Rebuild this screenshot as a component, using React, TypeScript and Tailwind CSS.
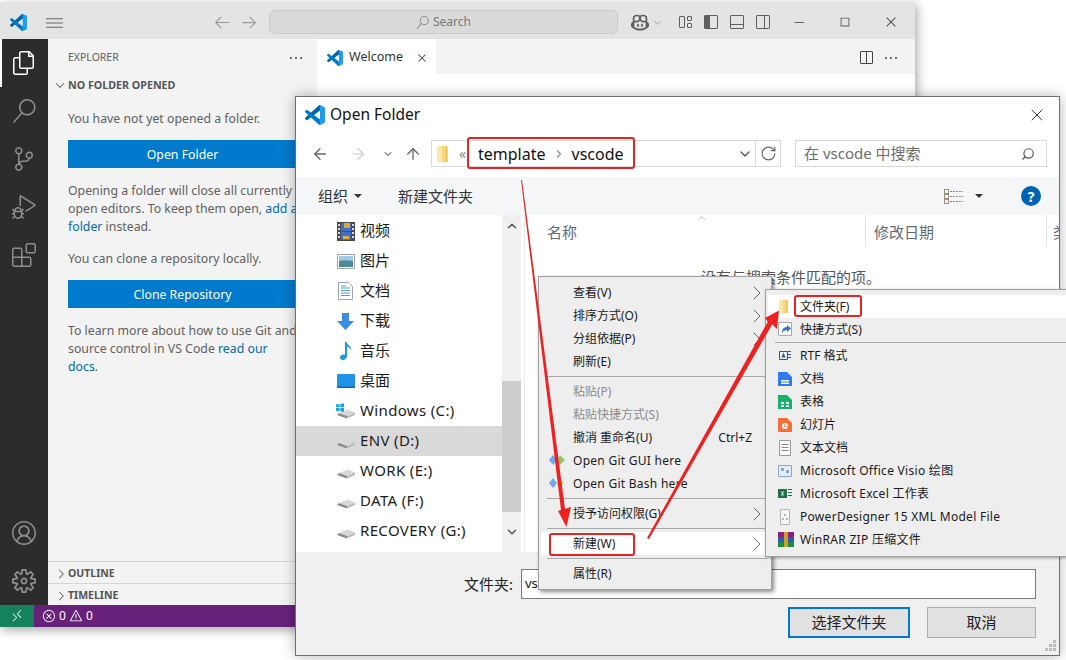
import React from "react";
import {
  VscFiles, VscSearch, VscSourceControl, VscDebugAlt, VscExtensions, VscAccount, VscSettingsGear,
  VscCopilot, VscChevronDown, VscChevronRight, VscEllipsis, VscArrowLeft, VscArrowRight, VscMenu,
  VscChromeMinimize, VscChromeMaximize, VscChromeClose, VscClose, VscSplitHorizontal, VscRemote,
  VscError, VscWarning, VscLayoutSidebarLeft, VscLayoutPanelOff, VscLayoutSidebarRightOff, VscLayout,
} from "react-icons/vsc";
import { ArrowLeft, ArrowRight, ArrowUp, ChevronDown, ChevronUp, ChevronRight, RotateCw, Search, X } from "lucide-react";

const Logo = ({ s = 18 }: { s?: number }) => (
  <svg width={s} height={s} viewBox="0 0 100 100" className="shrink-0">
    <path fill="#0065A9" d="M96.46 10.8 75.86.88C73.47-.27 70.62.21 68.75 2.08L1.3 63.58c-1.81 1.65-1.81 4.51 0 6.16l5.51 5.01c1.49 1.35 3.72 1.45 5.32.24L93.36 13.37C96.09 11.3 100 13.25 100 16.67v-.24c0-2.4-1.38-4.59-3.54-5.63Z" />
    <path fill="#007ACC" d="M96.46 89.2 75.86 99.12c-2.39 1.15-5.24.67-7.11-1.2L1.3 36.42c-1.81-1.66-1.81-4.51 0-6.16l5.51-5.01c1.49-1.35 3.72-1.45 5.32-.24l81.23 61.62c2.73 2.07 6.64.12 6.64-3.3v.24c0 2.4-1.38 4.59-3.54 5.63Z" />
    <path fill="#1F9CF0" d="M75.86 99.13c-2.39 1.15-5.24.66-7.11-1.21 2.31 2.31 6.25.67 6.25-2.59V4.67c0-3.26-3.94-4.89-6.25-2.59 1.87-1.87 4.72-2.35 7.11-1.21l20.6 9.91c2.16 1.04 3.54 3.23 3.54 5.63v67.17c0 2.4-1.38 4.59-3.54 5.63l-20.6 9.92Z" />
  </svg>
);

const Folder = ({ w = 13, h = 18 }: { w?: number; h?: number }) => (
  <svg width={w} height={h} viewBox="0 0 13 18" className="shrink-0">
    <path fill="#f6d67c" d="M1 1h9l2 1v15l-11 0Z" />
    <path fill="#fbe9a8" d="M1 1h4l1 1v15H1Z" />
    <path fill="#e8bd55" d="M10 1h1v16h-1Z" />
  </svg>
);

const Video = () => (
  <svg width="18" height="19" viewBox="0 0 18 19">
    <rect width="18" height="19" fill="#4a4a4a" />
    <rect x="4" y="1" width="10" height="8" fill="#3f6fc9" />
    <path fill="#d9a92f" d="M7 1h6v5H7Z" />
    <rect x="4" y="10" width="10" height="8" fill="#3f6fc9" />
    <path fill="#e0b23e" d="M6 14h6v3H6Z" />
    <path fill="#ddd" d="M1 2h2v2H1Zm0 4h2v2H1Zm0 4h2v2H1Zm0 4h2v2H1Zm14-12h2v2h-2Zm0 4h2v2h-2Zm0 4h2v2h-2Zm0 4h2v2h-2Z" />
  </svg>
);
const Picture = () => (
  <svg width="18" height="15" viewBox="0 0 18 15">
    <rect x=".5" y=".5" width="17" height="14" fill="#fff" stroke="#9aa7b1" />
    <rect x="2" y="2" width="14" height="5" fill="#a5c8e4" />
    <path fill="#4d8a98" d="M2 7c4-1 9-1 14 0v6H2Z" />
  </svg>
);
const Doc = () => (
  <svg width="15" height="18" viewBox="0 0 15 18">
    <path fill="#fff" stroke="#9aa7b1" d="M.5.5h10l4 4v13H.5Z" />
    <path stroke="#5b9bd0" d="M3 6h9M3 8.500h9M3 11h9M3 13.500h9M3 4h5" fill="none" />
  </svg>
);
const Download = () => (
  <svg width="17" height="17" viewBox="0 0 17 17"><path fill="#3a8ce0" d="M5 0h7v8h5l-8.500 9L0 8h5Z" /></svg>
);
const Music = () => (
  <svg width="12" height="18" viewBox="0 0 12 18"><path fill="#1c9ae0" d="M5 0h1.500c.4 3 5.500 4 4.500 8-.7-2-2.500-3-4-3.300V14c0 2.200-2 4-4 4s-3-1-3-2.500C0 13.500 2.500 12 5 12.800Z" /></svg>
);
const Desk = () => (
  <svg width="18" height="14" viewBox="0 0 18 14">
    <rect width="18" height="14" rx="1" fill="#1f93e8" />
    <rect y="12.500" width="18" height="1.500" fill="#0c68ad" />
  </svg>
);
const Drive = ({ win }: { win?: boolean }) => (
  <svg width="19" height="16" viewBox="0 0 19 16">
    <path fill="#d8d8d8" d="M3 10 12 6.500l7 3-8 3.500Z" />
    <path fill="#8a8a8a" d="M1 12 3 10l8 3v2.500Z" />
    <path fill="#bdbdbd" d="M11 13l8-3.500V12l-8 3.500Z" />
    {win && <path fill="#1ba1e2" d="M0 1.500 3.500 1v3.200H0Zm4.200-.6L8 .3v3.900H4.200ZM0 5h3.500v3.200L0 7.700Zm4.200 0H8v3.900l-3.800-.6Z" />}
  </svg>
);

const Ic = ({ c, d }: { c: string; d: React.ReactNode }) => (
  <svg width="14" height="16" viewBox="0 0 14 16" className="shrink-0"><g fill={c}>{d}</g></svg>
);

const Chev = () => <ChevronRight size={24} strokeWidth={0.8} className="text-[#444] shrink-0 -my-[1px]" />;

const Row = ({ t, dis, chev, right, hi, git }: { t: string; dis?: boolean; chev?: boolean; right?: string; hi?: boolean; git?: string }) => (
  <div className={`relative h-[23px] ml-[2px] mr-[1px] pl-[32px] pr-[1px] flex items-center justify-between text-[12px] whitespace-nowrap ${dis ? "text-[#8c8c8c]" : "text-[#1a1a1a]"} ${hi ? "bg-white" : ""}`}>
    {git && (
      <svg width="16" height="10" viewBox="0 0 16 10" className="absolute left-[8px] top-[6px]">
        <path fill="#6fa8ef" d="M4 0 8 5 4 10 0 5Z" />
        {git === "gui" && <path fill="#8cc86e" d="M11 0l5 5-5 5-3-5Z" />}
        {git === "bash" && <path fill="#c9d26a" d="M11 1l4 4-4 4-3-4Z" />}
      </svg>
    )}
    <span className={git ? "tracking-[0.27px]" : ""}>{t}</span>
    {right && <span className="mr-[17px]">{right}</span>}
    {chev && <Chev />}
  </div>
);
const Sep = () => <div className="h-[7px] flex items-center pl-[8px] pr-[4px]"><div className="h-px w-full bg-[#a8a8a8]" /></div>;

const TreeRow = ({ icon, t, sel, lat }: { icon: React.ReactNode; t: string; sel?: boolean; lat?: boolean }) => (
  <div className={`h-[30px] flex items-center text-[15px] text-[#1c1c1c] whitespace-nowrap ${sel ? "bg-[#d9d9d9]" : ""}`}>
    <span className="w-[40px] shrink-0" />
    <span className="w-[19px] flex justify-center shrink-0">{icon}</span>
    <span className={`ml-[5px] pb-[2px] ${lat ? "tracking-[0.35px]" : ""}`}>{t}</span>
  </div>
);

const SubRow = ({ icon, t, hi, lat }: { icon: React.ReactNode; t: string; hi?: boolean; lat?: boolean }) => (
  <div className={`h-[23px] ml-[2px] pl-[10px] flex items-center gap-[8px] text-[12px] text-[#1a1a1a] whitespace-nowrap ${hi ? "bg-white h-[22px]" : ""}`}>
    <span className="w-[14px] flex justify-start shrink-0">{icon}</span>
    <span className={lat ? "tracking-[0.29px]" : ""}>{t}</span>
  </div>
);

const act = "h-[48px] flex items-center justify-center";

export default function App() {
  return (
    <div className="relative w-[1066px] h-[660px] overflow-hidden bg-white font-['Noto_Sans','Noto_Sans_CJK_SC',sans-serif]">
      {/* VS Code window */}
      <div className="absolute left-0 top-[2px] w-[915px] h-[625px] flex flex-col shadow-[2px_3px_10px_rgba(0,0,0,0.35)]">
        <div className="h-[37px] pt-[3px] shrink-0 bg-[#e4e4e4] flex items-center relative text-[#777]">
          <div className="w-[46px] pl-[10px] shrink-0"><Logo s={17} /></div>
          <VscMenu size={17} className="text-[#666] shrink-0" />
          <div className="ml-[150px] flex gap-[9px] w-[51px] shrink-0 text-[#999]">
            <VscArrowLeft size={18} /><VscArrowRight size={18} />
          </div>
          <div className="ml-[5px] w-[349px] shrink-0 h-[24px] rounded-[6px] bg-[#dadada] border border-[#c9c9c9] flex items-center justify-center gap-[4px] text-[12px] text-[#777]">
            <VscSearch size={13} /><span>Search</span>
          </div>
          <div className="ml-[13px] flex items-center shrink-0 text-[#5f5f5f]">
            <VscCopilot size={18} /><VscChevronDown size={11} className="ml-[3px] text-[#888]" />
          </div>
          <div className="ml-[14px] flex gap-[10px] shrink-0 text-[#5f5f5f]">
            <VscLayout size={16} />
            <VscLayoutSidebarLeft size={16} />
            <VscLayoutPanelOff size={16} />
            <VscLayoutSidebarRightOff size={16} />
          </div>
          <div className="ml-[21px] w-[106px] shrink-0 flex justify-between text-[#555]">
            <VscChromeMinimize size={14} /><VscChromeMaximize size={14} /><VscChromeClose size={14} />
          </div>
        </div>
        <div className="flex-1 min-h-0 flex">
          <div className="w-[48px] shrink-0 bg-[#2c2c2c] flex flex-col justify-between text-[#8e8e8e]">
            <div className="flex flex-col">
              <div className={`${act} text-white border-l-2 border-white pr-[2px]`}><VscFiles size={24} /></div>
              <div className={act}><VscSearch size={24} /></div>
              <div className={act}><VscSourceControl size={24} /></div>
              <div className={act}><VscDebugAlt size={24} /></div>
              <div className={act}><VscExtensions size={24} /></div>
            </div>
            <div className="flex flex-col">
              <div className={act}><VscAccount size={24} /></div>
              <div className={act}><VscSettingsGear size={24} /></div>
            </div>
          </div>
          <div className="w-[269px] shrink-0 bg-[#f3f3f3] flex flex-col text-[#616161] text-[12.3px]">
            <div className="h-[35px] shrink-0 flex items-center justify-between pl-[20px] pr-[13px] pt-[2px] text-[10.5px]">
              <span>EXPLORER</span><VscEllipsis size={16} className="text-[#444]" />
            </div>
            <div className="h-[22px] shrink-0 flex items-center pl-[2px] font-bold text-[10.7px] text-[#555] whitespace-nowrap">
              <span className="w-[18px] flex justify-end pr-[1px]"><VscChevronDown size={14} /></span>NO FOLDER OPENED
            </div>
            <div className="flex-1 min-h-0 pl-[20px] pr-[20px] pt-[14px] leading-[18px] whitespace-nowrap">
              <p>You have not yet opened a folder.</p>
              <div className="mt-[12px] h-[28px] pt-[2px] bg-[#007acc] text-white flex items-center justify-center">Open Folder</div>
              <p className="mt-[14px]">Opening a folder will close all currently<br />open editors. To keep them open, <span className="text-[#006ab1]">add a<br />folder</span> instead.</p>
              <p className="mt-[14px]">You can clone a repository locally.</p>
              <div className="mt-[12px] h-[28px] pt-[2px] bg-[#007acc] text-white flex items-center justify-center">Clone Repository</div>
              <p className="mt-[14px]">To learn more about how to use Git and<br />source control in VS Code <span className="text-[#006ab1]">read our<br />docs</span>.</p>
            </div>
            <div className="h-[22px] shrink-0 border-t border-[#d4d4d4] flex items-center pt-[2px] font-bold text-[10.5px] text-[#555]">
              <span className="w-[20px] flex justify-end"><VscChevronRight size={14} /></span>OUTLINE
            </div>
            <div className="h-[22px] shrink-0 border-t border-[#d4d4d4] flex items-center pt-[2px] font-bold text-[10.5px] text-[#555]">
              <span className="w-[20px] flex justify-end"><VscChevronRight size={14} /></span>TIMELINE
            </div>
          </div>
          <div className="flex-1 min-w-0 bg-white flex flex-col">
            <div className="h-[35px] bg-[#f3f3f3] flex items-center justify-between pr-[16px]">
              <div className="w-[119px] h-full bg-white flex items-center pl-[10px] pt-[2px] text-[12.5px] text-[#333]">
                <Logo s={16} /><span className="ml-[6px]">Welcome</span>
                <VscClose size={14} className="ml-[12px]" />
              </div>
              <div className="flex items-center gap-[9px] pt-[2px] text-[#444]">
                <VscSplitHorizontal size={16} /><VscEllipsis size={16} />
              </div>
            </div>
          </div>
        </div>
        <div className="h-[22px] shrink-0 flex bg-[#68217a] text-white text-[12px]">
          <div className="w-[34px] bg-[#16825d] flex items-center justify-center"><VscRemote size={14} /></div>
          <div className="flex items-center pl-[8px] gap-[3px]">
            <VscError size={14} /><span>0</span><VscWarning size={14} /><span>0</span>
          </div>
        </div>
      </div>

      {/* Open Folder dialog */}
      <div className="absolute left-[295px] top-[96px] w-[765px] h-[560px] bg-white border border-[#6e6e6e] flex flex-col shadow-[0_0_12px_rgba(0,0,0,0.3)]">
        <div className="h-[35px] shrink-0 flex items-center justify-between pl-[9px] pr-[12px] text-[15.5px] text-[#111]">
          <div className="flex items-center gap-[5px]"><Logo s={20} /><span>Open Folder</span></div>
          <X size={20} strokeWidth={1} />
        </div>
        <div className="h-[45px] shrink-0 flex items-start pt-[8px] text-[#6a6a6a]">
          <div className="h-[27px] flex items-center pl-[15px] w-[135px]">
            <ArrowLeft size={18} strokeWidth={1.8} className="text-[#666]" />
            <ArrowRight size={18} strokeWidth={1.6} className="ml-[20px] text-[#ccc]" />
            <ChevronDown size={12} strokeWidth={2.2} className="ml-[15px] text-[#888]" />
            <ArrowUp size={18} strokeWidth={1.8} className="ml-[10px]" />
          </div>
          <div className="w-[350px] h-[27px] border border-[#d9d9d9] flex items-center pl-[4px] text-[16px] text-[#111]">
            <Folder />
            <span className="ml-[10px] text-[#888] text-[14px] w-[7px]">«</span>
            <span className="ml-[12px]">template</span>
            <ChevronRight size={12} strokeWidth={2.4} className="mx-[7px] text-[#888]" />
            <span>vscode</span>
            <span className="flex-1" />
            <ChevronDown size={16} strokeWidth={2} className="text-[#555]" />
            <span className="ml-[2px] w-[25px] h-full border-l border-[#d9d9d9] flex items-center justify-center">
              <RotateCw size={17} strokeWidth={1.6} className="text-[#666]" />
            </span>
          </div>
          <div className="ml-[14px] w-[252px] h-[27px] border border-[#d9d9d9] flex items-center justify-between pl-[8px] pr-[11px] text-[15px] text-[#6d6d6d]">
            <span>在 vscode 中搜索</span>
            <Search size={14} strokeWidth={2} className="text-[#555] -scale-x-100" />
          </div>
        </div>
        <div className="h-[38px] shrink-0 bg-[#f5f6f7] flex items-center pl-[22px] pr-[18px] text-[15px] text-[#333]">
          <span>组织</span>
          <span className="ml-[6px] w-0 h-0 border-x-[4px] border-x-transparent border-t-[4px] border-t-[#333]" />
          <span className="ml-[36px]">新建文件夹</span>
          <span className="flex-1" />
          <svg width="19" height="15" viewBox="0 0 19 15">
            <g fill="none" stroke="#a08f7c"><rect x=".5" y=".5" width="4" height="4" /><rect x=".5" y="5.500" width="4" height="4" /><rect x=".5" y="10.500" width="4" height="4" /></g>
            <path stroke="#888" strokeDasharray="2 1" d="M6 2.500h13M6 7.500h13M6 12.500h13" />
          </svg>
          <span className="ml-[12px] w-0 h-0 border-x-[4px] border-x-transparent border-t-[4px] border-t-[#333]" />
          <span className="ml-[38px] w-[20px] h-[20px] rounded-full bg-[#0063b1] text-white flex items-center justify-center font-bold text-[14px]">?</span>
        </div>
        <div className="h-[337px] shrink-0 flex">
          <div className="w-[206px] shrink-0 overflow-hidden pt-[1px]">
            <TreeRow icon={<Video />} t="视频" />
            <TreeRow icon={<Picture />} t="图片" />
            <TreeRow icon={<Doc />} t="文档" />
            <TreeRow icon={<Download />} t="下载" />
            <TreeRow icon={<Music />} t="音乐" />
            <TreeRow icon={<Desk />} t="桌面" />
            <TreeRow icon={<Drive win />} t="Windows (C:)" lat />
            <TreeRow icon={<Drive />} t="ENV (D:)" sel lat />
            <TreeRow icon={<Drive />} t="WORK (E:)" lat />
            <TreeRow icon={<Drive />} t="DATA (F:)" lat />
            <TreeRow icon={<Drive />} t="RECOVERY (G:)" lat />
          </div>
          <div className="w-[19px] shrink-0 bg-[#f0f0f0] flex flex-col items-center text-[#555]">
            <div className="h-[22px] flex items-center"><ChevronUp size={14} strokeWidth={2.5} /></div>
            <div className="mt-[144px] h-[131px] w-full bg-[#cdcdcd]" />
            <div className="flex-1 flex items-center"><ChevronDown size={14} strokeWidth={2.5} /></div>
          </div>
          <div className="flex-1 min-w-0 ml-[3px] border-l border-[#e8e8e8] relative">
            <div className="h-[32px] flex text-[15px] text-[#5e6a78] whitespace-nowrap">
              <div className="w-[341px] border-r border-[#e5e5e5] pl-[22px] flex items-center pt-[2px]">名称</div>
              <div className="w-[181px] border-r border-[#e5e5e5] pl-[8px] flex items-center pt-[2px]">修改日期</div>
              <div className="flex-1 pl-[6px] overflow-hidden flex items-center pt-[2px]">类</div>
            </div>
            <ChevronUp size={12} strokeWidth={1} className="absolute left-[171px] -top-[3px] text-[#777]" />
            <div className="mt-[19px] pl-[176px] text-[15px] text-[#555] whitespace-nowrap">没有与搜索条件匹配的项。</div>
          </div>
        </div>
        <div className="flex-1 min-h-0 bg-[#f0f0f0] relative">
          <div className="flex items-center pt-[17px] pl-[168px]">
            <span className="text-[15px] text-[#222] w-[57px]">文件夹:</span>
            <div className="w-[515px] h-[30px] bg-white border border-[#7a7a7a] flex items-center pl-[3px] text-[13px] text-[#111]">vscode</div>
          </div>
          <div className="flex justify-end gap-[17px] pr-[23px] mt-[8px] text-[15px] text-[#222]">
            <div className="w-[122px] h-[31px] bg-[#e1e1e1] border-2 border-[#0078d7] flex items-center justify-center">选择文件夹</div>
            <div className="w-[109px] h-[31px] bg-[#e1e1e1] border border-[#adadad] flex items-center justify-center">取消</div>
          </div>
          <svg width="12" height="12" viewBox="0 0 12 12" className="absolute right-[3px] bottom-[3px]">
            <path fill="#bdbdbd" d="M9 0h3v3H9ZM5 4h3v3H5Zm4 0h3v3H9ZM1 8h3v3H1Zm4 0h3v3H5Zm4 0h3v3H9Z" />
          </svg>
        </div>
      </div>

      {/* Context menu */}
      <div className="absolute left-[538px] top-[276px] w-[234px] h-[314px] bg-[#eeeeee] border border-[#a0a0a0] pt-[4px] shadow-[2px_2px_4px_rgba(0,0,0,0.45)]">
        <Row t="查看(V)" chev />
        <Row t="排序方式(O)" chev />
        <Row t="分组依据(P)" chev />
        <Row t="刷新(E)" />
        <Sep />
        <Row t="粘贴(P)" dis />
        <Row t="粘贴快捷方式(S)" dis />
        <Row t="撤消 重命名(U)" right="Ctrl+Z" />
        <Row t="Open Git GUI here" git="gui" />
        <Row t="Open Git Bash here" git="bash" />
        <Sep />
        <Row t="授予访问权限(G)" chev />
        <Sep />
        <Row t="新建(W)" chev hi />
        <Sep />
        <Row t="属性(R)" />
      </div>

      {/* Sub menu */}
      <div className="absolute left-[765px] top-[289px] w-[310px] h-[268px] bg-[#eeeeee] border border-[#a0a0a0] pt-[5px] shadow-[1px_1px_3px_rgba(0,0,0,0.35)]">
        <SubRow icon={<Folder w={11} h={15} />} t="文件夹(F)" hi />
        <SubRow t="快捷方式(S)" icon={<Ic c="#2f74c0" d={<><path fill="#fff" stroke="#aaa" d="M.5.500h13v13H.5Z" /><path d="M4 11c0-4 2-6 5-6V3l4 3.500L9 10V8c-2 0-4 1-5 3Z" /></>} />} />
        <div className="h-[3px] flex items-center pl-[9px]"><div className="h-px w-full bg-[#a8a8a8]" /></div>
        <SubRow t="RTF 格式" icon={<Ic c="#2b579a" d={<><path fill="none" stroke="#2b579a" d="M1.500 3.500h8v8h-8Z" /><path d="M3.500 9.500l2-5 2 5ZM10 3h3v1h-3Zm0 3h3v1h-3Zm0 3h3v1h-3Z" /></>} />} />
        <SubRow t="文档" icon={<Ic c="#2f7bf0" d={<><path d="M0 1h9l5 5v9H0Z" /><path fill="#fff" d="M3 9h8v1.500H3Zm0 2.500h8V13H3Z" /></>} />} />
        <SubRow t="表格" icon={<Ic c="#17b26a" d={<><path d="M0 1h9l5 5v9H0Z" /><path fill="#fff" d="M3 8h3v2H3Zm5 0h3v2H8Zm-5 3h3v2H3Zm5 0h3v2H8Z" /></>} />} />
        <SubRow t="幻灯片" icon={<Ic c="#f4703a" d={<><path d="M0 1h9l5 5v9H0Z" /><circle cx="7" cy="9" r="3" fill="#fff" /><path d="M7 7v2h2v.700H6.300V7Z" /></>} />} />
        <SubRow t="文本文档" icon={<Ic c="#888" d={<><path fill="#fff" stroke="#999" d="M1.500.500h11v15h-11Z" /><path d="M3.500 4h7v1h-7Zm0 3h7v1h-7Zm0 3h7v1h-7Z" /></>} />} />
        <SubRow lat t="Microsoft Office Visio 绘图" icon={<Ic c="#8aa7d6" d={<><path fill="#e4ecf7" stroke="#8aa7d6" d="M.5 2.500h13v11H.5Z" /><path d="M3 5h3v3H3Zm5 2h3v3H8Z" /></>} />} />
        <SubRow lat t="Microsoft Excel 工作表" icon={<Ic c="#1d7145" d={<><rect x="0" y="3" width="9" height="9" /><path fill="#fff" d="M3 5.500h1L4.500 7l.5-1.500h1L5 7.500l1 2H5l-.5-1.500L4 9.500H3l1-2Z" /><path d="M10 3h4v1h-4Zm0 3h4v1h-4Zm0 3h4v1h-4Z" /></>} />} />
        <SubRow lat t="PowerDesigner 15 XML Model File" icon={<Ic c="#b0b8b4" d={<><path fill="#f5f5f5" stroke="#b0b8b4" d="M2.500.500h9v15h-9Z" /><path d="M4 9h2v2H4Zm4 0h2v2H8ZM6 5h2v2H6Z" /></>} />} />
        <SubRow lat t="WinRAR ZIP 压缩文件" icon={<svg width="16" height="15" viewBox="0 0 16 15" className="shrink-0"><rect width="16" height="5" fill="#8a1f7a" /><rect y="5" width="16" height="5" fill="#2a5bb0" /><rect y="10" width="16" height="5" fill="#1f8a4a" /><rect x="6" width="4" height="15" fill="#c9a227" /></svg>} />
      </div>

      {/* Annotations */}
      <div className="absolute left-[467px] top-[137px] w-[168px] h-[32px] border-[2.5px] border-[#ee2020] rounded-[3px]" />
      <div className="absolute left-[549px] top-[533px] w-[86px] h-[23px] border-[2.5px] border-[#ee2020] rounded-[3px]" />
      <div className="absolute left-[794px] top-[295px] w-[68px] h-[22px] border-[2.5px] border-[#ee2020] rounded-[3px]" />
      <svg className="absolute left-0 top-0 pointer-events-none" width="1066" height="660" viewBox="0 0 1066 660">
        <path fill="#ee2020" d="M521 180 522 180 565 509 571 507 566.500 527 558 511 561 510Z" />
        <path fill="#ee2020" d="M647 538 767.800 321.800 765 318 779 310.500 777 329 772.200 324.200 649 539Z" />
      </svg>
    </div>
  );
}
